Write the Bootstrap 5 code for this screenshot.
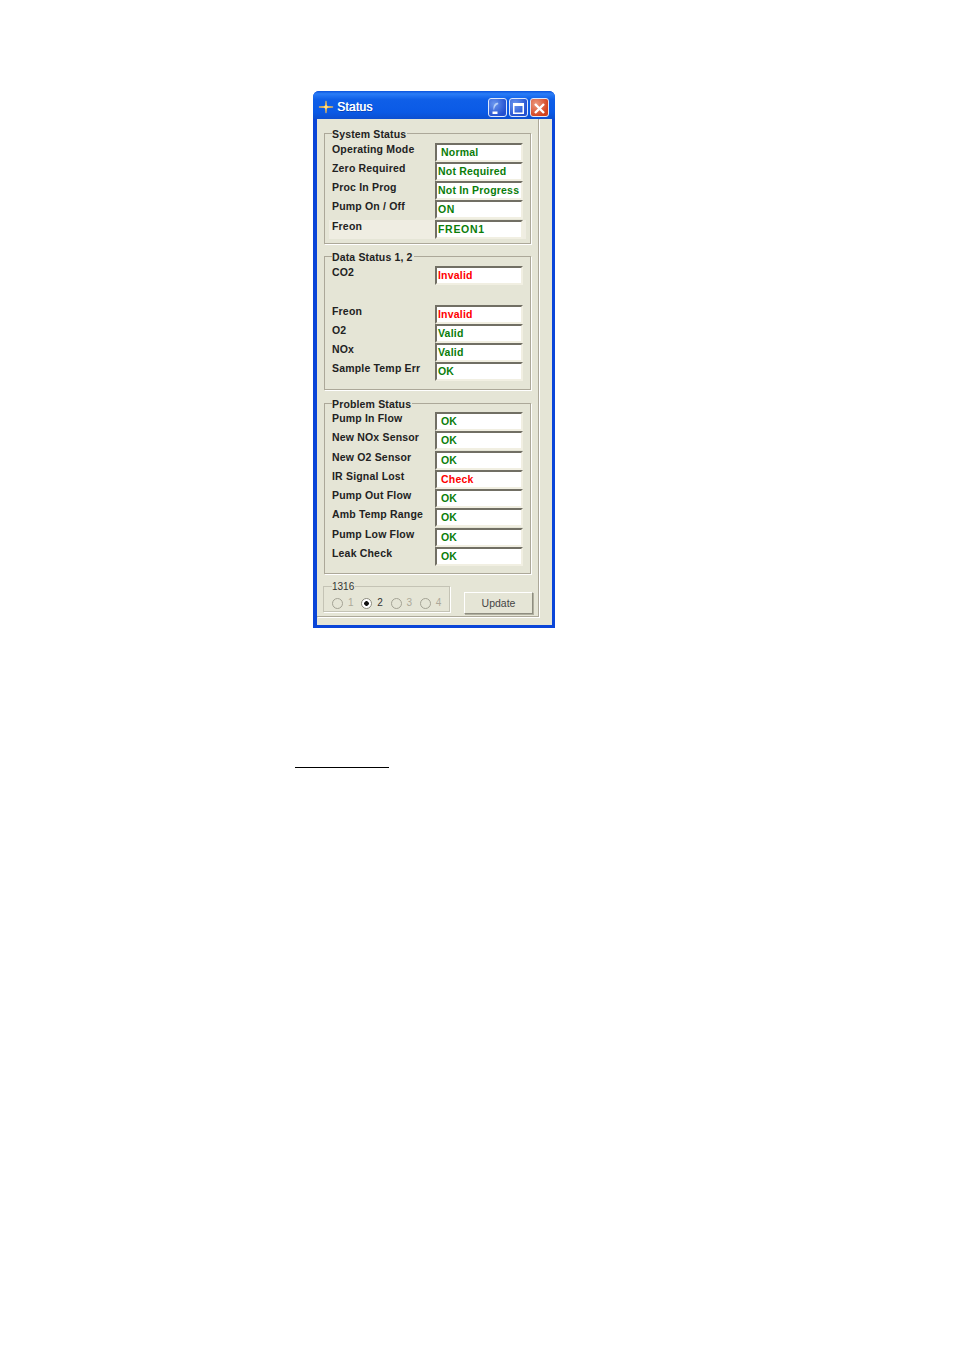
<!DOCTYPE html>
<html lang="en"><head><meta charset="utf-8"><title>Status</title>
<link href="https://cdn.jsdelivr.net/npm/bootstrap@5.3.0/dist/css/bootstrap.min.css" rel="stylesheet">
<style>
body{background:#fff;font-family:"Liberation Sans",Arial,sans-serif;}
.page-wrap{padding-top:91px;}
.xp-win{width:242px;height:537px;margin-left:313px;background:#0a45d8;border-radius:6px 6px 0 0;padding:0 3px 3px 4px;}
.xp-title{height:28px;color:#fff;font-size:12px;letter-spacing:.25px;text-shadow:.4px 0 0 #fff,1px 1px 0 #0b3fb0;margin:0 -3px 0 -4px;padding:4px 6px 0 5px;border-radius:6px 6px 0 0;background:linear-gradient(180deg,#0a53dd 0,#2a7cf6 10%,#0f5fe8 30%,#0a5ae6 75%,#0c4fd0 100%);}
.xp-ico{margin-right:3px;flex:none;}
.xp-btn{width:19px;height:19px;border:1px solid #dfe8fb;border-radius:3px;display:block;}
.xp-btn.blue{background:radial-gradient(circle at 30% 30%,#6a96ee,#2350d0 75%);}
.xp-btn.red{background:radial-gradient(circle at 30% 30%,#ec9a80,#d2401c 75%);}
.xp-body{height:506px;background:#e5e5d6;}
.xp-panel{width:222px;height:498px;border-right:1px solid #aca899;border-bottom:1px solid #aca899;padding:7px 0 0 7px;box-shadow:1px 1px 0 #fff;}
.grp{width:207px;border:1px solid #aca899!important;box-shadow:1px 1px 0 #fff;padding:0 7px!important;margin:0 0 6px!important;}
.grp legend{float:none;width:auto;margin:0;padding:2px 1px 0 0;font-size:10.5px;line-height:12px;font-weight:700;letter-spacing:.15px;color:#222;}
.grp-sys{height:118px;margin-bottom:5px!important;}.grp-data{height:141px;}.grp-prob{height:178px;}
.st-row{height:19px;}
.st-lbl{width:103px;font-size:10.5px;line-height:12px;font-weight:700;letter-spacing:.18px;color:#222;white-space:nowrap;}
.st-fld{width:88px;height:19px;background:#fff;border-style:solid;border-width:2px;border-color:#716f64 #f1efe2 #f1efe2 #716f64;font-size:10.5px;line-height:15px;font-weight:700;letter-spacing:.2px;padding-left:1px;white-space:nowrap;overflow:hidden;}
.st-fld.ind{padding-left:4px;}
.st-fld.wide{letter-spacing:.7px;}
.ok{color:#0a7d0a;}.bad{color:#f00;}
.hi{background:#efede2;margin:1px 4px 0 -3px;padding-left:3px;width:197px;}
.spc{height:20px;}
.pad-sys{padding-top:3px;}.pad-sys .st-fld{line-height:14px;}
.pad-data{padding-top:3px;}
.pad-prob{padding-top:2px;}.pad-prob .st-row{height:19.25px;}
.bot{margin:-1px 0 0 -1px;}
.grp-rad{width:127px;height:33px;border:1px solid #c4c3b5!important;box-shadow:1px 1px 0 #fff;padding:0 0 0 8px!important;}
.grp-rad legend{float:none;width:auto;margin:0;padding:2px 1px 0 0;font-size:10px;line-height:12px;color:#333;}
.rd-row{margin-top:3px;}
.rd{width:30px;height:14px;font-size:10px;line-height:14px;color:#aca899;}
.rd i{display:block;width:11px;height:11px;border-radius:50%;border:1px solid #a3a294;background:#e5e5d6;margin-right:5px;flex:none;}
.rd.on{color:#333;}
.rd.on i{background:radial-gradient(circle,#111 0 2px,#fff 2.6px);border-color:#8d8c80;}
.upd{width:69px;height:22px;margin:13px 0 0 14px;border:1px solid #fff;border-right-color:#8e8d80;border-bottom-color:#8e8d80;background:#e5e5d6;border-radius:0;font-size:10.5px;line-height:19px;padding:0;color:#444;box-shadow:1px 1px 0 #b0af9f;}
.foot-rule{width:94px;height:1px;background:#000;margin:139px 0 0 295px;}
</style></head><body>
<div class="page-wrap">
<div class="xp-win">
 <div class="xp-title d-flex align-items-center">
  <svg class="xp-ico" width="16" height="16" viewBox="0 0 16 16"><path d="M8 1 9 7 16 8 9 9 8 15 7 9 0 8 7 7Z" fill="#ffb52e"/><path d="M1 7.600h14v.8H1zM7.600 2h.8v12h-.8z" fill="#ffc95a"/><circle cx="8" cy="8" r="1.800" fill="#ffdf8a"/></svg>
  <span class="flex-grow-1">Status</span>
  <div class="d-flex" style="gap:2px">
   <span class="xp-btn blue"><svg width="17" height="17" viewBox="0 0 17 17"><path d="M3.500 11.500h5v2.500h-5z" fill="#fff"/><path d="M8.500 2.500c-3.500.8-5 4.500-3.500 8 .3-3 1.500-5.500 4.500-6.500z" fill="#b4cdf8"/></svg></span>
   <span class="xp-btn blue"><svg width="17" height="17" viewBox="0 0 17 17"><path fill-rule="evenodd" d="M3 3h11v11H3zM4.500 6v6.500h8V6z" fill="#fff"/></svg></span>
   <span class="xp-btn red"><svg width="17" height="17" viewBox="0 0 17 17"><path d="M4 4 13 13M13 4 4 13" stroke="#fff" stroke-width="2.400"/></svg></span>
  </div>
 </div>
 <div class="xp-body">
 <div class="xp-panel">
  <fieldset class="grp grp-sys"><legend>System Status</legend>
   <div class="pad-sys">
   <div class="st-row d-flex"><div class="st-lbl">Operating Mode</div><div class="st-fld ok ind">Normal</div></div>
   <div class="st-row d-flex"><div class="st-lbl">Zero Required</div><div class="st-fld ok">Not Required</div></div>
   <div class="st-row d-flex"><div class="st-lbl">Proc In Prog</div><div class="st-fld ok">Not In Progress</div></div>
   <div class="st-row d-flex"><div class="st-lbl">Pump On / Off</div><div class="st-fld ok wide">ON</div></div>
   <div class="st-row d-flex hi"><div class="st-lbl">Freon</div><div class="st-fld ok wide">FREON1</div></div>
   </div>
  </fieldset>
  <fieldset class="grp grp-data"><legend>Data Status 1, 2</legend>
   <div class="pad-data">
   <div class="st-row d-flex"><div class="st-lbl">CO2</div><div class="st-fld bad">Invalid</div></div>
   <div class="spc"></div>
   <div class="st-row d-flex"><div class="st-lbl">Freon</div><div class="st-fld bad">Invalid</div></div>
   <div class="st-row d-flex"><div class="st-lbl">O2</div><div class="st-fld ok">Valid</div></div>
   <div class="st-row d-flex"><div class="st-lbl">NOx</div><div class="st-fld ok">Valid</div></div>
   <div class="st-row d-flex"><div class="st-lbl">Sample Temp Err</div><div class="st-fld ok">OK</div></div>
   </div>
  </fieldset>
  <fieldset class="grp grp-prob"><legend>Problem Status</legend>
   <div class="pad-prob">
   <div class="st-row d-flex"><div class="st-lbl">Pump In Flow</div><div class="st-fld ok ind">OK</div></div>
   <div class="st-row d-flex"><div class="st-lbl">New NOx Sensor</div><div class="st-fld ok ind">OK</div></div>
   <div class="st-row d-flex"><div class="st-lbl">New O2 Sensor</div><div class="st-fld ok ind">OK</div></div>
   <div class="st-row d-flex"><div class="st-lbl">IR Signal Lost</div><div class="st-fld bad ind">Check</div></div>
   <div class="st-row d-flex"><div class="st-lbl">Pump Out Flow</div><div class="st-fld ok ind">OK</div></div>
   <div class="st-row d-flex"><div class="st-lbl">Amb Temp Range</div><div class="st-fld ok ind">OK</div></div>
   <div class="st-row d-flex"><div class="st-lbl">Pump Low Flow</div><div class="st-fld ok ind">OK</div></div>
   <div class="st-row d-flex"><div class="st-lbl">Leak Check</div><div class="st-fld ok ind">OK</div></div>
   </div>
  </fieldset>
  <div class="d-flex align-items-start bot">
   <fieldset class="grp-rad"><legend>1316</legend>
    <div class="d-flex rd-row">
     <div class="rd d-flex align-items-center"><i></i>1</div>
     <div class="rd on d-flex align-items-center"><i></i>2</div>
     <div class="rd d-flex align-items-center"><i></i>3</div>
     <div class="rd d-flex align-items-center"><i></i>4</div>
    </div>
   </fieldset>
   <button type="button" class="btn upd">Update</button>
  </div>
 </div>
 </div>
</div>
<div class="foot-rule"></div>
</div>
<script src="https://cdn.jsdelivr.net/npm/bootstrap@5.3.0/dist/js/bootstrap.bundle.min.js"></script>
</body></html>
